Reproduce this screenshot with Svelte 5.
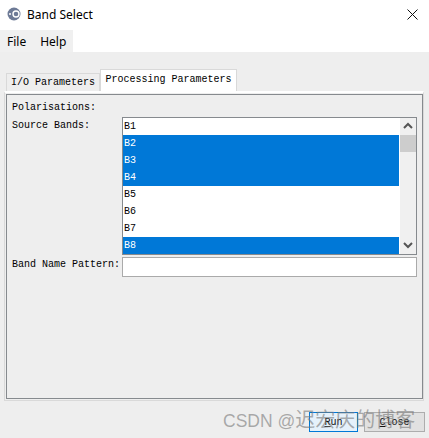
<script>
	const bands = [
		{ name: 'B1', selected: false },
		{ name: 'B2', selected: true },
		{ name: 'B3', selected: true },
		{ name: 'B4', selected: true },
		{ name: 'B5', selected: false },
		{ name: 'B6', selected: false },
		{ name: 'B7', selected: false },
		{ name: 'B8', selected: true }
	];
</script>

<div class="window">
	<header class="titlebar">
		<svg class="logo" width="14" height="14" viewBox="0 0 14 14">
			<circle cx="7" cy="7" r="6.5" fill="#6d7a96" />
			<circle cx="9" cy="7" r="3" fill="none" stroke="#fff" stroke-width="1.4" />
			<circle cx="3" cy="7" r="1" fill="#fff" />
		</svg>
		<span class="title">Band Select</span>
		<svg class="close" width="11" height="11" viewBox="0 0 11 11">
			<path d="M0.5 0.5 L10.5 10.5 M10.5 0.5 L0.5 10.5" stroke="#111" fill="none" />
		</svg>
	</header>

	<div class="menubar">
		<nav class="menus">
			<span>File</span>
			<span>Help</span>
		</nav>
	</div>

	<main class="content">
		<div class="tabs">
			<div class="tab">I/O Parameters</div>
			<div class="tab active">Processing Parameters</div>
		</div>
		<div class="tabpane">
			<div class="form">
				<div class="label">Polarisations:</div>
				<div class="row">
					<div class="label source">Source Bands:</div>
					<div class="listbox">
						<div class="items">
							{#each bands as band}
								<div class="item" class:selected={band.selected}>{band.name}</div>
							{/each}
						</div>
						<div class="scrollbar">
							<svg width="16" height="17" viewBox="0 0 16 17">
								<path d="M4 10 L8 6 L12 10" stroke="#555" stroke-width="2" fill="none" />
							</svg>
							<div class="thumb"></div>
							<div class="spacer"></div>
							<svg width="16" height="17" viewBox="0 0 16 17">
								<path d="M4 6 L8 10 L12 6" stroke="#555" stroke-width="2" fill="none" />
							</svg>
						</div>
					</div>
				</div>
				<div class="row pattern">
					<div class="label">Band Name Pattern:</div>
					<div class="textfield"></div>
				</div>
			</div>
		</div>
		<footer class="buttons">
			<button class="primary"><u>R</u>un</button>
			<button><u>C</u>lose</button>
		</footer>
	</main>
	<div class="watermark">CSDN @<span class="cjk">迟宏庆的博客</span></div>
</div>

<style>
	:global(body) {
		margin: 0;
		background: #fff;
	}

	.window {
		position: relative;
		width: 429px;
		height: 438px;
		overflow: hidden;
		display: flex;
		flex-direction: column;
		font-family: 'Liberation Mono', monospace;
		font-size: 10px;
		color: #000;
	}

	.titlebar {
		height: 28px;
		padding: 0 7px 2px;
		display: flex;
		align-items: center;
		gap: 6px;
		font-family: 'Noto Sans', sans-serif;
		font-size: 12px;
	}

	.close {
		margin-left: auto;
		margin-right: 4px;
	}

	.menubar {
		height: 22px;
		display: flex;
	}

	.menus {
		width: 73px;
		background: #f0f0f0;
		display: flex;
		gap: 14px;
		padding: 0 7px;
		box-sizing: border-box;
		align-items: center;
		font-family: 'Noto Sans', sans-serif;
		font-size: 12px;
	}

	.content {
		flex: 1;
		background: #eeeeee;
		display: flex;
		flex-direction: column;
		padding: 17px 4px 5px 4px;
	}

	.tabs {
		display: flex;
		align-items: flex-end;
		padding-left: 2px;
		height: 22px;
	}

	.tab {
		height: 18px;
		width: 94px;
		box-sizing: border-box;
		border: 1px solid #d9d9d9;
		border-bottom: none;
		text-align: center;
		line-height: 17px;
		white-space: nowrap;
	}

	.tab.active {
		height: 22px;
		width: 137px;
		background: #fff;
		line-height: 20px;
	}

	.tabpane {
		height: 310px;
		margin-right: 1px;
		box-sizing: border-box;
		border: 1px solid #d9d9d9;
		border-top: 2px solid #fff;
		padding: 1px 0 0 1px;
	}

	.form {
		height: 305px;
		box-sizing: border-box;
		border: 1px solid #868a8e;
		padding: 6px 5px 0 5px;
	}

	.label {
		line-height: 13px;
		white-space: nowrap;
	}

	.source {
		margin-top: 2px;
	}

	.row {
		display: flex;
		margin-top: 3px;
	}

	.row > .label {
		width: 110px;
		flex: none;
	}

	.listbox {
		flex: 1;
		height: 138px;
		box-sizing: border-box;
		border: 1px solid #868a8e;
		display: flex;
		background: #fff;
	}

	.items {
		flex: 1;
	}

	.item {
		height: 17px;
		line-height: 17px;
		padding-left: 1px;
	}

	.item.selected {
		background: #0078d7;
		color: #fff;
	}

	.scrollbar {
		width: 16px;
		margin-left: 1px;
		background: #f0f0f0;
		display: flex;
		flex-direction: column;
	}

	.thumb {
		height: 17px;
		background: #cdcdcd;
	}

	.spacer {
		flex: 1;
	}

	.row.pattern {
		margin-top: 2px;
	}

	.pattern .label {
		margin-top: 1px;
	}

	.textfield {
		flex: 1;
		height: 20px;
		box-sizing: border-box;
		background: #fff;
		border: 1px solid #aaa;
	}

	.buttons {
		display: flex;
		justify-content: flex-end;
		gap: 6px;
		margin-top: 11px;
	}

	button {
		width: 61px;
		height: 20px;
		padding: 0;
		background: #e1e1e1;
		border: 1px solid #adadad;
		font: inherit;
		color: #111;
	}

	button.primary {
		width: 49px;
		background: #e5f1fb;
		border: 1px solid #0078d7;
	}

	.watermark {
		position: absolute;
		left: 223px;
		top: 404px;
		font-family: 'Liberation Sans', 'Noto Sans CJK SC', sans-serif;
		font-size: 17.5px;
		color: rgba(120, 120, 120, 0.6);
		white-space: nowrap;
	}

	.cjk {
		font-size: 20px;
	}
</style>
